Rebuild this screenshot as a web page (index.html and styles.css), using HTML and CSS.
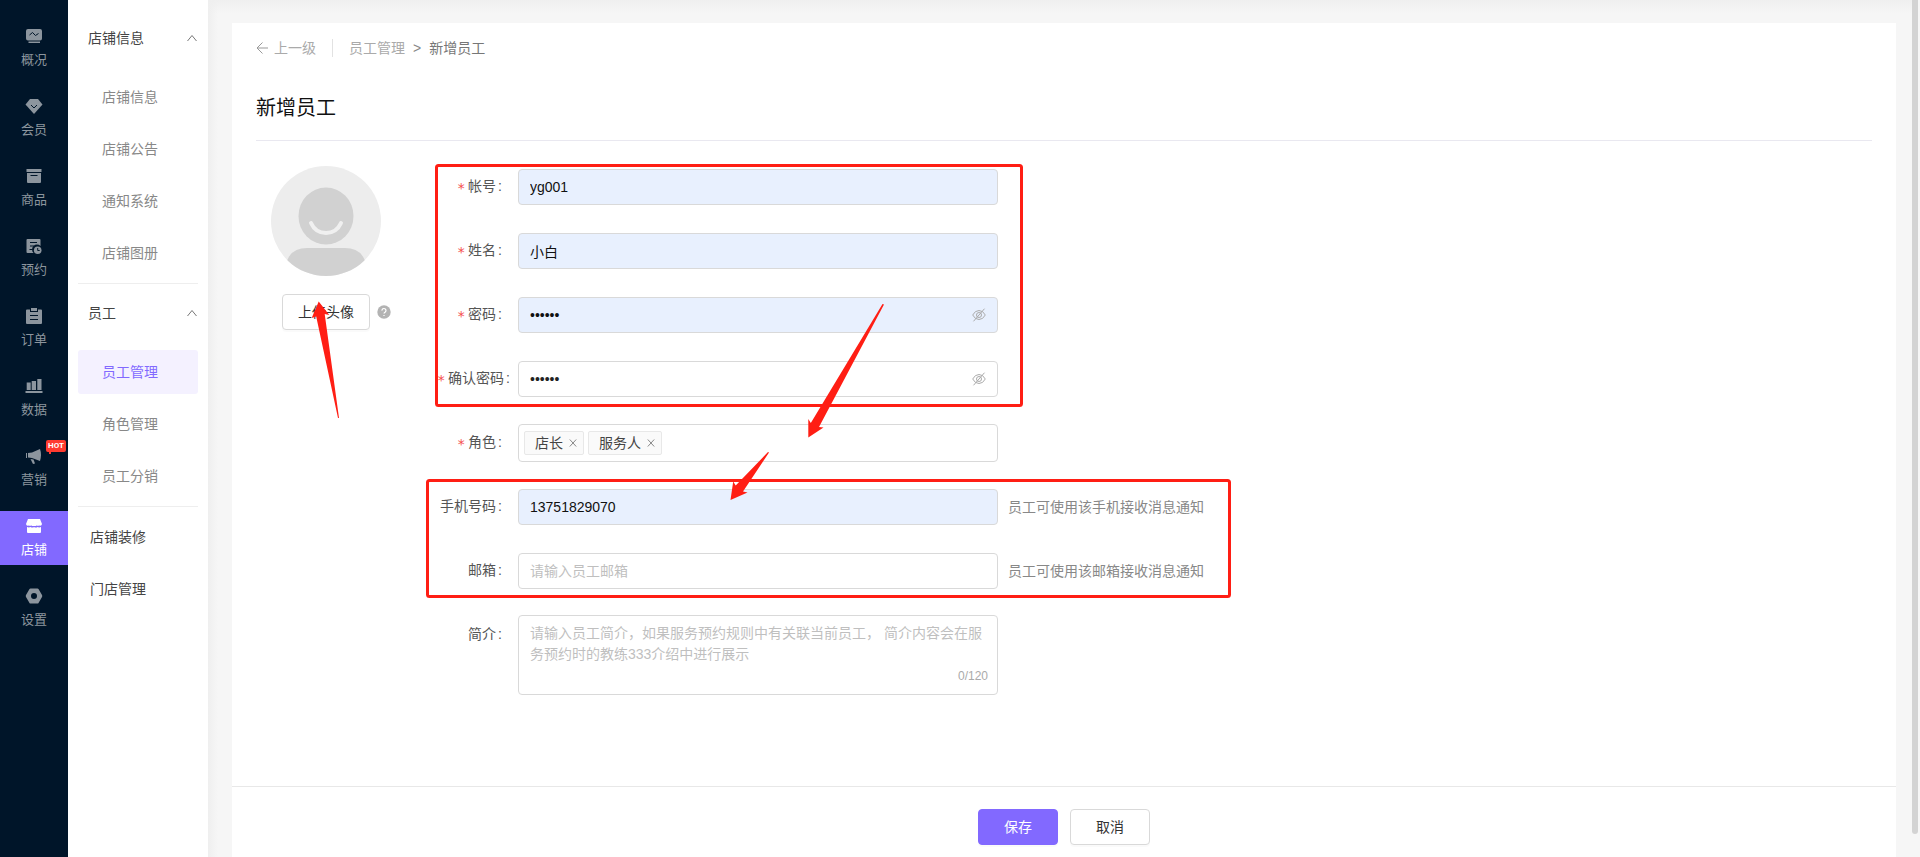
FILE: index.html
```html
<!DOCTYPE html>
<html lang="zh-CN">
<head>
<meta charset="utf-8">
<title>新增员工</title>
<link rel="stylesheet" href="styles.css">
</head>
<body>
<div class="app">
  <nav class="rail" aria-label="主导航">
    <a class="rail-item" href="#"><svg viewBox="0 0 18 18" class="rail-icon"><path fill="currentColor" d="M3 2h12a2 2 0 0 1 2 2v7.500a2 2 0 0 1-2 2H3a2 2 0 0 1-2-2V4a2 2 0 0 1 2-2zM3.500 14.500h11.500V16H3.500z"/><path d="M4.500 8 7.500 5.500l3 3L13.500 6.500" class="cut"/></svg><span>概况</span></a>
    <a class="rail-item" href="#"><svg viewBox="0 0 18 18" class="rail-icon"><path fill="currentColor" d="M5 2h8l4.500 5.500L9 17 .5 7.500z"/><path d="M6 8l3 3 3-3" class="cut"/></svg><span>会员</span></a>
    <a class="rail-item" href="#"><svg viewBox="0 0 18 18" class="rail-icon"><path fill="currentColor" d="M1.500 2h15v3h-15zM2 6h14v9a1 1 0 0 1-1 1H3a1 1 0 0 1-1-1z"/><path d="M5.500 8.500h7" class="cut"/></svg><span>商品</span></a>
    <a class="rail-item" href="#"><svg viewBox="0 0 18 18" class="rail-icon"><path fill="currentColor" d="M2.500 2h12a1 1 0 0 1 1 1v6A4.800 4.800 0 0 0 8.500 16h-6a1 1 0 0 1-1-1V3a1 1 0 0 1 1-1z"/><circle cx="12.700" cy="13.200" r="3.800" fill="currentColor"/><path d="M5 5.500h7M5 9h4M4.500 12.500h3M12.700 11v2.500h2" class="cut"/></svg><span>预约</span></a>
    <a class="rail-item" href="#"><svg viewBox="0 0 18 18" class="rail-icon"><path fill="currentColor" d="M2 2.500h3V5h8V2.500h3a1 1 0 0 1 1 1V16a1 1 0 0 1-1 1H2a1 1 0 0 1-1-1V3.500a1 1 0 0 1 1-1zM6 1h6v3H6z"/><path d="M5 8.500h8M5 12.500h8" class="cut"/></svg><span>订单</span></a>
    <a class="rail-item" href="#"><svg viewBox="0 0 18 18" class="rail-icon"><path fill="currentColor" d="M1.700 5.500h4V13h-4zM6.700 4H11v9H6.700zM12.300 2h4.200v11h-4.200zM.5 14h17v2H.5z"/></svg><span>数据</span></a>
    <a class="rail-item" href="#"><svg viewBox="0 0 18 18" class="rail-icon"><path fill="currentColor" d="M1 6h1v5H1zM3 6l4-.5L15 2q2 5.500 0 12l-8-3-4-.5zM5.500 12l3 .5 1.500 4-2 .5z"/></svg><span>营销</span><em class="hot">HOT</em></a>
    <a class="rail-item rail-active" href="#"><svg viewBox="0 0 18 18" class="rail-icon"><path fill="currentColor" d="M3 2h12l2 5a2 2 0 0 1-2.700 1.500A3 3 0 0 1 11.600 8.500 3 3 0 0 1 9 9 3 3 0 0 1 6.400 8.500 3 3 0 0 1 3.700 8.500 2 2 0 0 1 1 7zM2 10q2 .8 3.500 0 2 1 3.500 0 2 1 3.500 0 1.500 .8 3.500 0v5a1 1 0 0 1-1 1H3a1 1 0 0 1-1-1z"/></svg><span>店铺</span></a>
    <a class="rail-item" href="#"><svg viewBox="0 0 18 18" class="rail-icon"><path fill="currentColor" fill-rule="evenodd" d="M5.500 1.500h7q.7 0 1 .6L17 8q.5 1 0 2l-3.500 6q-.3.600-1 .600h-7q-.7 0-1-.600L1 10q-.5-1 0-2l3.500-5.900q.3-.6 1-.6zM9 6a3 3 0 1 0 0 6 3 3 0 0 0 0-6z"/></svg><span>设置</span></a>
  </nav>

  <nav class="subnav" aria-label="店铺导航">
    <button class="group" type="button"><span>店铺信息</span><svg class="chevron" viewBox="0 0 10 8"><path d="M.5 7 5 1.500 9.500 7"/></svg></button>
    <a class="sub" href="#">店铺信息</a>
    <a class="sub" href="#">店铺公告</a>
    <a class="sub" href="#">通知系统</a>
    <a class="sub" href="#">店铺图册</a>
    <hr class="sub-rule">
    <button class="group" type="button"><span>员工</span><svg class="chevron" viewBox="0 0 10 8"><path d="M.5 7 5 1.500 9.500 7"/></svg></button>
    <a class="sub sub-active" href="#">员工管理</a>
    <a class="sub" href="#">角色管理</a>
    <a class="sub" href="#">员工分销</a>
    <hr class="sub-rule">
    <a class="sub sub-top" href="#">店铺装修</a>
    <a class="sub sub-top" href="#">门店管理</a>
  </nav>

  <div class="stage">
    <main class="panel">
      <div class="crumbs">
        <a class="back" href="#"><svg class="back-icon" viewBox="0 0 12 12"><path d="M12 6H1M6.500.5 1 6l5.500 5.500"/></svg>上一级</a>
        <a class="crumb" href="#">员工管理</a>
        <span class="crumb-sep">&gt;</span>
        <span class="crumb-now">新增员工</span>
      </div>
      <h1 class="title">新增员工</h1>

      <div class="body">
        <section class="avatar-box">
          <svg class="avatar" viewBox="0 0 110 110">
            <defs><clipPath id="disc"><circle cx="55" cy="55" r="55"/></clipPath></defs>
            <g clip-path="url(#disc)">
              <rect width="110" height="110" fill="#ededed"/>
              <ellipse cx="55" cy="50" rx="27.500" ry="28.500" fill="#d1d1d1"/>
              <path d="M40 57q4.500 10 15 10t15-10" fill="none" stroke="#f0f0f0" stroke-width="4" stroke-linecap="round"/>
              <path d="M14 104q2-22 22-22h38q20 0 22 22v8H14z" fill="#d1d1d1"/>
            </g>
          </svg>
          <div class="upload">
            <button class="btn btn-upload" type="button">上传头像</button>
            <svg class="help" viewBox="0 0 14 14"><circle cx="7" cy="7" r="6.700" fill="#b3b3b3"/><path d="M5 5.600a2 2 0 1 1 3.200 1.500Q7 7.700 7 8.600M7 9.900v1.200" fill="none" stroke="#fff" stroke-width="1.200"/></svg>
          </div>
        </section>

        <form class="form" id="staff">
          <div class="row">
            <label class="label required" for="account">帐号</label>
            <input class="control filled" id="account" type="text" value="yg001">
          </div>
          <div class="row">
            <label class="label required" for="name">姓名</label>
            <input class="control filled" id="name" type="text" value="小白">
          </div>
          <div class="row">
            <label class="label required" for="pwd">密码</label>
            <div class="control filled">
              <input class="bare" id="pwd" type="password" value="123456">
              <svg class="eye" viewBox="0 0 14 14"><path d="M.7 7Q3 2.500 7 2.500T13.300 7Q11 11.500 7 11.500T.7 7zM12.500.7 1.500 13.300"/><circle cx="7" cy="7" r="2.500"/></svg>
            </div>
          </div>
          <div class="row">
            <label class="label label-long required" for="pwd2">确认密码</label>
            <div class="control">
              <input class="bare" id="pwd2" type="password" value="123456">
              <svg class="eye" viewBox="0 0 14 14"><path d="M.7 7Q3 2.500 7 2.500T13.300 7Q11 11.500 7 11.500T.7 7zM12.500.7 1.500 13.300"/><circle cx="7" cy="7" r="2.500"/></svg>
            </div>
          </div>
          <div class="row">
            <span class="label required">角色</span>
            <div class="control tags">
              <span class="tag">店长<button class="tag-x" type="button" aria-label="移除店长"><svg viewBox="0 0 8 8"><path d="M.8.500l6.400 7M7.200.500l-6.400 7"/></svg></button></span>
              <span class="tag">服务人<button class="tag-x" type="button" aria-label="移除服务人"><svg viewBox="0 0 8 8"><path d="M.8.500l6.400 7M7.200.500l-6.400 7"/></svg></button></span>
            </div>
          </div>
          <div class="row">
            <label class="label" for="phone">手机号码</label>
            <input class="control filled" id="phone" type="text" value="13751829070">
            <span class="hint">员工可使用该手机接收消息通知</span>
          </div>
          <div class="row">
            <label class="label" for="mail">邮箱</label>
            <input class="control" id="mail" type="text" placeholder="请输入员工邮箱">
            <span class="hint">员工可使用该邮箱接收消息通知</span>
          </div>
          <div class="row row-top">
            <label class="label" for="intro">简介</label>
            <div class="control area">
              <textarea class="bare" id="intro" rows="2" placeholder="请输入员工简介，如果服务预约规则中有关联当前员工， 简介内容会在服务预约时的教练333介绍中进行展示"></textarea>
              <span class="count">0/120</span>
            </div>
          </div>
        </form>
      </div>

      <footer class="actions">
        <button class="btn btn-primary" type="submit" form="staff">保存</button>
        <button class="btn" type="button">取消</button>
      </footer>
    </main>
  </div>
  <div class="track"><div class="thumb"></div></div>

  <svg class="marks" width="1920" height="857" viewBox="0 0 1920 857" aria-hidden="true">
    <g fill="none" stroke="#ff1e14" stroke-width="3">
      <rect x="436.500" y="165.500" width="585" height="240" rx="2"/>
      <rect x="427.500" y="480.500" width="802" height="116" rx="2"/>
    </g>
    <g fill="#ff1e14">
      <path d="M339 418 324.700 314l4.600 1-10.600-13.500-7 16.500 4.500-1.500L338 418z"/>
      <path d="M884 304.500 819 427l4.500.5-15.200 10v-18.500l2.500 4L882.500 304z"/>
      <path d="M769 452.500 743 491.500l4.500 1-17 7.500 2.700-18.500 2.500 4L768 452z"/>
    </g>
  </svg>
</div>
</body>
</html>
```

FILE: styles.css
```css
* { box-sizing: border-box; }
body {
  margin: 0;
  font: 14px/22px "Liberation Sans", "Noto Sans CJK SC", sans-serif;
  color: #333;
  background: #f6f6f6;
}
a { color: inherit; text-decoration: none; }
button, input, textarea { font: inherit; color: inherit; }
svg { display: block; flex: none; }

.app { position: relative; display: flex; height: 100vh; overflow: hidden; }

.rail {
  flex: none;
  width: 68px;
  padding-top: 21px;
  display: flex;
  flex-direction: column;
  gap: 16px;
  background: #001529;
}
.rail-item {
  position: relative;
  display: flex;
  flex-direction: column;
  align-items: center;
  gap: 5px;
  padding: 6px 0 5px;
  font-size: 13px;
  line-height: 20px;
  color: #8c959e;
}
.rail-icon { width: 18px; height: 18px; }
.rail-active { color: #fff; background: #8269ff; }
.cut { fill: none; stroke: #001529; stroke-width: 1; }
.hot {
  position: absolute;
  top: -1px;
  right: 2px;
  width: 20px;
  border-radius: 2px;
  background: #ff3b30;
  color: #fff;
  text-align: center;
  font: bold 8px/12px Roboto, sans-serif;
}
.hot::after {
  content: "";
  position: absolute;
  left: 3px;
  top: 12px;
  border: 1px solid #ff3b30;
}

.subnav {
  flex: none;
  width: 140px;
  padding: 9px 10px 0;
  display: flex;
  flex-direction: column;
  gap: 8px;
  background: #fff;
  color: #444;
}
.group {
  display: flex;
  align-items: center;
  justify-content: space-between;
  height: 58px;
  padding: 0 1px 0 10px;
  border: 0;
  background: none;
}
.chevron { width: 10px; height: 8px; fill: none; stroke: #777; }
.sub { padding: 11px 24px; border-radius: 3px; color: #888; }
.sub-active { color: #8269ff; background: #f4f1ff; }
.sub-top { padding-left: 12px; color: #444; }
.sub-rule { width: 100%; margin: 0; border: 0; border-top: 1px solid #eee; }
.sub-rule + .group { margin-top: -8px; }

.stage {
  flex: 1;
  min-width: 0;
  padding: 23px 16px 0 24px;
  display: flex;
  background:
    linear-gradient(#efefef, #f6f6f600 14px),
    linear-gradient(90deg, #efefef, #f6f6f6 10px);
}
.panel { flex: 1; display: flex; flex-direction: column; background: #fff; }
.crumbs {
  display: flex;
  align-items: center;
  padding: 14px 24px 0;
  color: #aaa;
}
.back { display: flex; align-items: center; gap: 6px; }
.back-icon { width: 12px; height: 12px; fill: none; stroke: #999; }
.crumb { margin-left: 16px; padding-left: 16px; border-left: 1px solid #e2e2e2; line-height: 18px; }
.crumb-sep { margin: 0 8px; color: #888; }
.crumb-now { color: #777; }
.title {
  margin: 34px 24px 0;
  padding-bottom: 17px;
  border-bottom: 1px solid #e9e8f0;
  font-size: 20px;
  line-height: 30px;
  font-weight: 400;
  color: #111;
}

.body { flex: 1; display: flex; padding: 26px 24px 0; }
.avatar-box {
  flex: none;
  width: 181px;
  padding-left: 15px;
  display: flex;
  flex-direction: column;
  gap: 18px;
}
.avatar { width: 110px; height: 110px; margin-top: -1px; }
.upload { display: flex; align-items: center; gap: 7px; padding-left: 11px; }
.help { width: 14px; height: 14px; }

.btn {
  min-width: 80px;
  height: 36px;
  padding: 0 15px;
  border: 1px solid #d9d9d9;
  border-radius: 4px;
  background: #fff;
  box-shadow: 0 2px 0 rgba(0, 0, 0, .02);
}
.btn-upload { width: 88px; }
.btn-primary { border-color: #8269ff; background: #8269ff; color: #fff; }

.form { flex: 1; display: flex; flex-direction: column; gap: 24px; }
.row {
  display: grid;
  grid-template-columns: 73px 480px auto;
  column-gap: 8px;
  justify-content: start;
  align-items: center;
  min-height: 40px;
}
.row-top { align-items: start; }
.label {
  justify-self: end;
  align-self: start;
  margin-right: 8px;
  white-space: nowrap;
  line-height: 38px;
  color: #555;
}
/* Four-character required labels use the gutter before the field */
.label-long { justify-self: start; margin-right: 0; }
.label::after { content: ":"; margin-left: 2px; }
.required::before {
  content: "*";
  display: inline-block;
  width: 7px;
  margin-right: 4px;
  vertical-align: -2px;
  font: 14px/20px "DejaVu Sans Mono", monospace;
  color: #f5504e;
}
.control {
  display: flex;
  align-items: center;
  width: 100%;
  height: 36px;
  padding: 0 11px;
  border: 1px solid #d9d9d9;
  border-radius: 4px;
  background: #fff;
  color: #222;
}
.filled { background: #e8f0fe; color: #111; }
.control::placeholder, .bare::placeholder { color: #bfbfbf; opacity: 1; }
.bare { flex: 1; min-width: 0; padding: 0; border: 0; outline: 0; background: none; resize: none; }
.eye { width: 14px; height: 14px; fill: none; stroke: #aaa; }
.tags { height: 38px; gap: 4px; padding: 0 5px; }
.tag {
  display: flex;
  align-items: center;
  gap: 6px;
  height: 24px;
  padding: 0 6px 0 10px;
  border: 1px solid #e8e8e8;
  border-radius: 2px;
  background: #fafafa;
  color: #444;
}
.tag-x { width: 8px; padding: 0; border: 0; background: none; }
.tag-x svg { width: 8px; height: 8px; fill: none; stroke: #888; }
.hint { margin-left: 2px; color: #888; }
.area { flex-direction: column; align-items: stretch; height: 80px; padding: 7px 11px; }
.area .bare { flex: none; line-height: 21px; overflow: hidden; }
.count { align-self: flex-end; margin-right: -2px; font-size: 12px; line-height: 22px; color: #aaa; }

.actions {
  display: flex;
  justify-content: center;
  gap: 12px;
  padding: 22px 0 12px;
  border-top: 1px solid #e8e8e8;
}

.track { flex: none; width: 8px; padding-right: 2px; background: #f6f6f6; }
.thumb { height: calc(100% - 23px); border-radius: 0 0 3px 3px; background: #d3d3d3; }

.marks { position: absolute; left: 0; top: 0; pointer-events: none; }
```
